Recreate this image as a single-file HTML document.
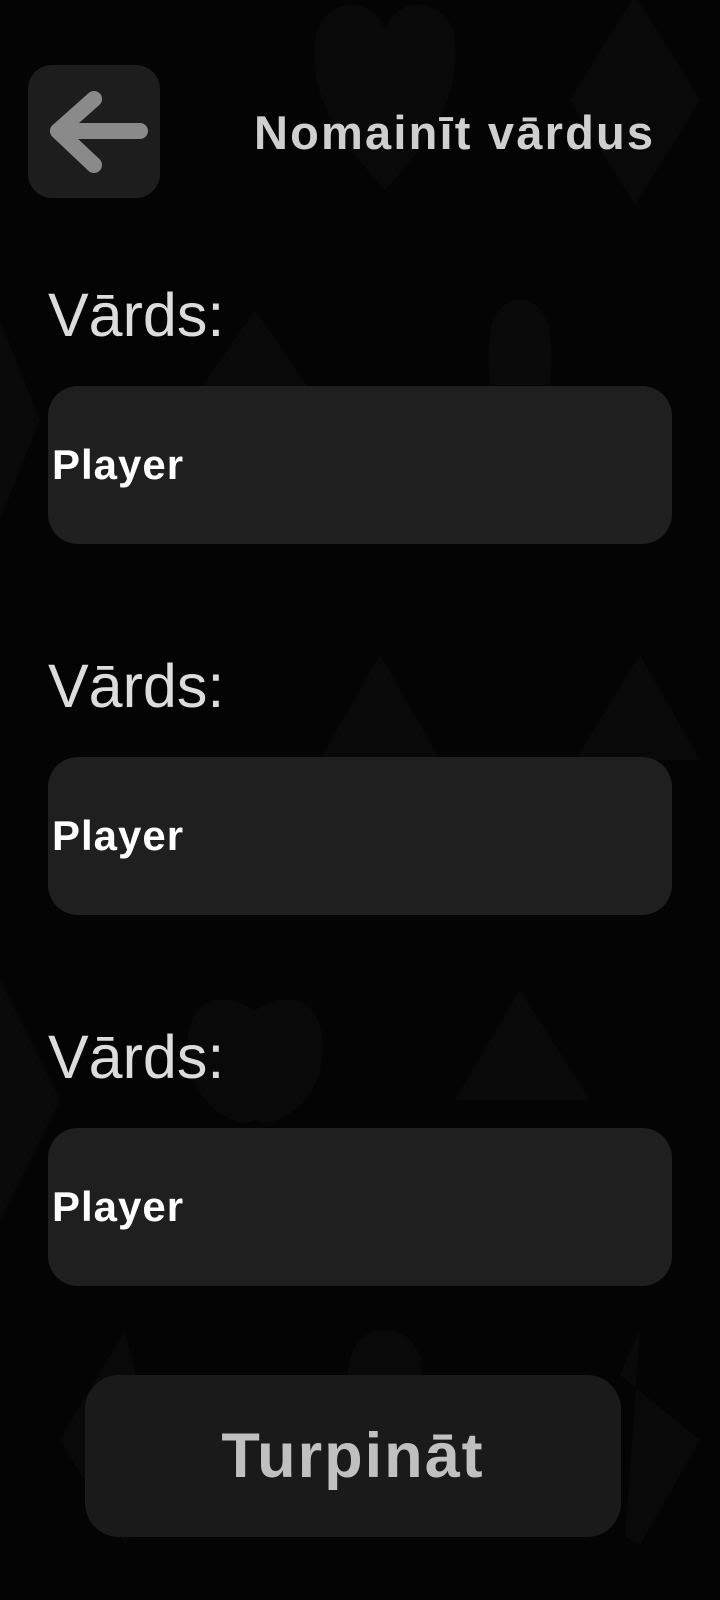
<!DOCTYPE html>
<html><head><meta charset="utf-8"><style>
*{margin:0;padding:0;box-sizing:border-box}
body{width:720px;height:1600px;background:#040404;position:relative;overflow:hidden;font-family:"Liberation Sans",sans-serif}
.bg{position:absolute;left:0;top:0}
.abs{position:absolute}
.back{left:28px;top:65px;width:132px;height:133px;background:#1d1d1d;border-radius:24px}
.title{left:254px;top:105px;font-size:47px;font-weight:bold;color:#cfcfcf;letter-spacing:2.2px;white-space:nowrap}
.lbl{left:48px;font-size:61px;color:#dcdcdc;white-space:nowrap}
.box{left:48px;width:624px;height:158px;background:#1f1f1f;border-radius:30px}
.box span{position:absolute;left:4px;top:55px;font-size:42px;font-weight:bold;color:#fff;letter-spacing:1px}
.btn{left:85px;top:1375px;width:536px;height:162px;background:#1a1a1a;border-radius:34px;text-align:center;line-height:162px;font-size:63px;font-weight:bold;color:#c0c0c0;letter-spacing:2px}
</style></head><body>
<svg class="bg" width="720" height="1600" viewBox="0 0 720 1600">
<g fill="#090909">
<path d="M385 190 C330 130 310 90 315 40 C320 0 370 -10 385 30 C400 -10 450 0 455 40 C460 90 440 130 385 190Z"/>
<path d="M635 205 L570 100 L635 -5 L700 100Z"/>
<path d="M255 310 L200 390 L310 390Z"/>
<path d="M520 300 C490 300 485 340 490 385 L550 385 C555 340 550 300 520 300Z"/>
<path d="M380 655 L320 760 L440 760Z"/>
<path d="M640 655 L575 760 L700 760Z"/>
<path d="M255 1010 C200 980 180 1020 190 1070 C200 1110 240 1130 255 1120 C270 1130 310 1110 320 1070 C330 1020 310 980 255 1010Z"/>
<path d="M520 990 L455 1100 L590 1100Z"/>
<path d="M125 1330 L60 1440 L125 1545 L160 1480Z"/>
<path d="M385 1330 C350 1330 345 1370 350 1380 L420 1380 C425 1370 420 1330 385 1330Z"/>
<path d="M640 1330 L620 1375 L700 1440 L640 1545 L625 1537Z"/>
<path d="M0 320 L40 420 L0 520Z"/>
<path d="M0 980 L60 1100 L0 1220Z"/>
</g>
</svg>
<div class="abs back"></div>
<svg class="abs" style="left:28px;top:65px" width="132" height="133" viewBox="0 0 132 133">
<g stroke="#8a8a8a" stroke-width="16" stroke-linecap="round" stroke-linejoin="round" fill="none">
<path d="M112 66 H30"/>
<path d="M66 34 L30 66 L66 100"/>
</g>
</svg>
<div class="abs title">Nomainīt vārdus</div>

<div class="abs lbl" style="top:280px">Vārds:</div>
<div class="abs box" style="top:386px"><span>Player</span></div>

<div class="abs lbl" style="top:651px">Vārds:</div>
<div class="abs box" style="top:757px"><span>Player</span></div>

<div class="abs lbl" style="top:1022px">Vārds:</div>
<div class="abs box" style="top:1128px"><span>Player</span></div>

<div class="abs btn">Turpināt</div>
</body></html>
